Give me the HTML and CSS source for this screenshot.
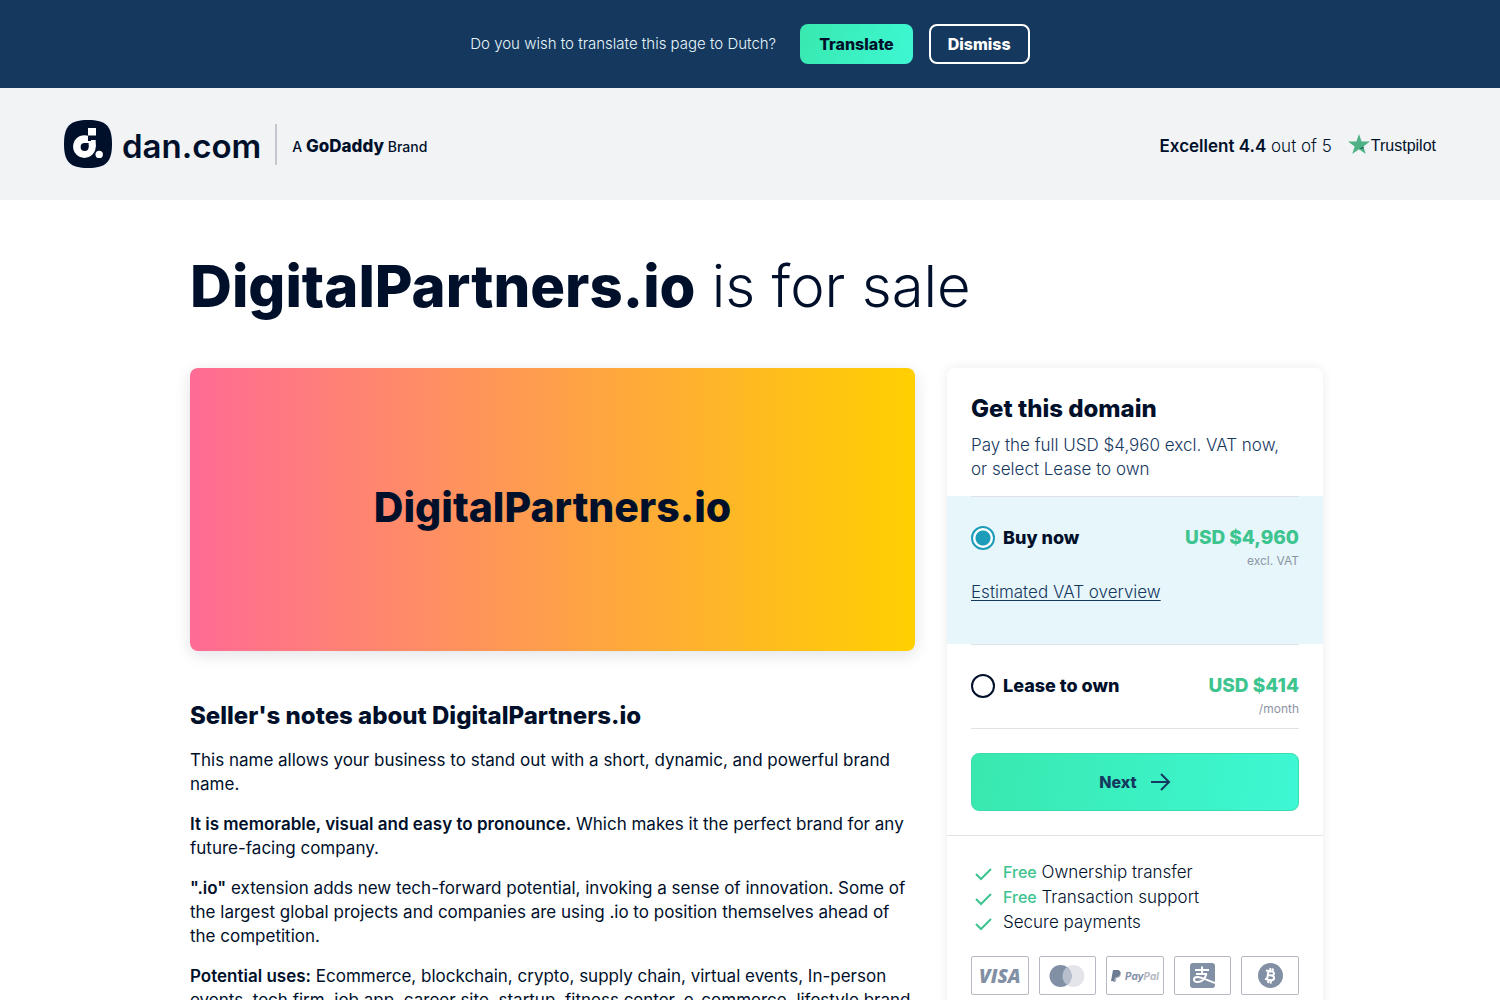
FILE: index.html
```html
<!DOCTYPE html>
<html lang="en">
<head>
    <meta charset="UTF-8">
    <meta name="viewport" content="width=device-width, initial-scale=1.0">
    <title>DigitalPartners.io is for sale</title>
    <link rel="stylesheet" href="styles.css">
</head>
<body>
    <div class="translate-bar">
        <span class="translate-text">Do you wish to translate this page to Dutch?</span>
        <button type="button" class="btn btn-translate">Translate</button>
        <button type="button" class="btn btn-dismiss">Dismiss</button>
    </div>

    <header class="header">
        <a href="#" class="logo">
            <svg class="logo-mark" viewBox="0 0 48 48" aria-hidden="true">
                <path fill="#00102b" d="M24 0C42 0 48 6 48 24S42 48 24 48 0 42 0 24 6 0 24 0z"/>
                <circle fill="#fff" cx="20.400" cy="26.600" r="11.300"/>
                <path fill="#00102b" d="M24 15.500h8V21h-8z"/>
                <path fill="#fff" d="M24 8h8v7.500h-8zM27 20h4.700v7H27z"/>
                <circle fill="#00102b" cx="20.600" cy="27" r="4"/>
                <path fill="#00102b" d="M20.600 23h4v4h-4z"/>
                <circle fill="#fff" cx="35.200" cy="34.400" r="3.700"/>
            </svg>
            <span class="logo-name">dan.com</span>
            <span class="logo-brand">A <b>GoDaddy</b> Brand</span>
        </a>
        <a href="#" class="trust">
            <span class="trust-score"><b>Excellent 4.4</b> out of 5</span>
            <span class="trust-logo">
                <svg width="22" height="20" viewBox="0 0 22 20" aria-hidden="true">
                    <path fill="#4fb286" d="M11 0l2.600 7.600H22l-6.700 4.800L17.800 20 11 15.300 4.200 20l2.500-7.600L0 7.600h8.400z"/>
                    <path fill="#1b5a4a" d="M15.300 12.400l.6 1.800L11 15.300z"/>
                </svg>
                <span class="trust-name">Trustpilot</span>
            </span>
        </a>
    </header>

    <main class="main">
        <h1><b>DigitalPartners.io</b> is for sale</h1>

        <div class="columns">
            <div class="content">
                <div class="banner">DigitalPartners.io</div>
                <h2>Seller's notes about DigitalPartners.io</h2>
                <p>This name allows your business to stand out with a short, dynamic, and powerful brand name.</p>
                <p><b>It is memorable, visual and easy to pronounce.</b> Which makes it the perfect brand for any future-facing company.</p>
                <p><b>".io"</b> extension adds new tech-forward potential, invoking a sense of innovation. Some of the largest global projects and companies are using .io to position themselves ahead of the competition.</p>
                <p><b>Potential uses:</b> Ecommerce, blockchain, crypto, supply chain, virtual events, In-person events, tech firm, job app, career site, startup, fitness center, e-commerce, lifestyle brand</p>
            </div>

            <aside class="card">
                <form>
                    <div class="card-intro">
                        <h2>Get this domain</h2>
                        <p>Pay the full USD $4,960 excl. VAT now, or select Lease to own</p>
                    </div>
                    <div class="option option-buy">
                        <div class="option-body">
                            <label class="option-label"><input type="radio" name="plan" checked> Buy now</label>
                            <div class="price">USD $4,960 <small>excl. VAT</small></div>
                        </div>
                        <a href="#" class="vat-link">Estimated VAT overview</a>
                    </div>
                    <div class="option option-lease">
                        <div class="option-body">
                            <label class="option-label"><input type="radio" name="plan"> Lease to own</label>
                            <div class="price">USD $414 <small>/month</small></div>
                        </div>
                    </div>
                    <div class="card-action">
                        <button type="submit" class="btn-next">
                            Next
                            <svg width="20" height="18" viewBox="0 0 20 18" fill="none" stroke="currentColor" stroke-width="2" aria-hidden="true">
                                <path d="M0 9h18M10 1l8 8-8 8"/>
                            </svg>
                        </button>
                    </div>
                </form>

                <div class="card-info">
                    <ul class="features">
                        <li><b>Free</b> Ownership transfer</li>
                        <li><b>Free</b> Transaction support</li>
                        <li>Secure payments</li>
                    </ul>
                    <div class="payments">
                        <span class="payment visa">VISA</span>
                        <span class="payment">
                            <svg width="36" height="24" viewBox="0 0 36 24" aria-label="Mastercard">
                                <circle cx="24.500" cy="12" r="11" fill="#e3e5eb"/>
                                <circle cx="11.500" cy="12" r="11" fill="#8290a6"/>
                                <path fill="#b7bfcc" d="M18 3.100a11 11 0 0 1 0 17.800 11 11 0 0 1 0-17.800z"/>
                            </svg>
                        </span>
                        <span class="payment paypal">
                            <svg width="10" height="12" viewBox="0 0 10 12" aria-hidden="true">
                                <path fill="#a5aebd" d="M3 2h6.500c1 4-1 6-4 6l-1 4H2z"/>
                                <path fill="#6c7a92" d="M2 0h4c3 0 4 2 3 4.500C8.200 6.500 6.500 7 4 7l-1 4H0z"/>
                            </svg>
                            <span>Pay<i>Pal</i></span>
                        </span>
                        <span class="payment">
                            <svg width="25" height="25" viewBox="0 0 25 25" fill="none" stroke="#fff" aria-label="Alipay">
                                <rect width="25" height="25" rx="3" fill="#8290a6" stroke="none"/>
                                <path stroke-width="2" d="M5 7h14M12 3.500v7M6 11h11"/>
                                <path stroke-width="2" d="M16.500 11c-1.500 4.500-5 8-9 8-5 0-4.500-5 0-5 4 0 9 3 17.500 6"/>
                            </svg>
                        </span>
                        <span class="payment">
                            <svg width="25" height="25" viewBox="0 0 25 25" fill="none" stroke="#fff" aria-label="Bitcoin">
                                <circle cx="12.500" cy="12.500" r="12.500" fill="#8290a6" stroke="none"/>
                                <path stroke-width="2" d="M8 7.500l6 1c3 .6 2.500 4-.500 4l-3-.500 3 .500c4 .8 3 5-.500 4.600l-6-1M10.500 8l-1.500 8.500M12.500 5l-.5 3M15 5.500l-.5 3M10.500 17l-.5 3M13 17.500l-.5 3"/>
                            </svg>
                        </span>
                    </div>
                </div>
            </aside>
        </div>
    </main>
</body>
</html>
```
FILE: styles.css
```css
* {
    box-sizing: border-box;
}
body {
    margin: 0;
    font-family: Inter, "Liberation Sans", sans-serif;
    font-size: 17px;
    font-weight: 300;
    line-height: 24px;
    color: #00102b;
    background-color: #fff;
}
a {
    color: inherit;
    text-decoration: none;
}
h1, h2, p, ul {
    margin: 0;
    padding: 0;
}
button {
    font-family: inherit;
    cursor: pointer;
}

/* translate bar */
.translate-bar {
    display: flex;
    justify-content: center;
    align-items: center;
    padding: 24px;
    background-color: #15385f;
}
.translate-text {
    margin-right: 24px;
    font-size: 15px;
    color: #e6f6fa;
}
.btn {
    height: 40px;
    padding: 0 17px;
    border: 2px solid transparent;
    border-radius: 8px;
    font-size: 16px;
    font-weight: 800;
}
.btn-translate {
    margin-right: 16px;
    border: 0;
    padding: 0 19px;
    background: linear-gradient(110deg, #38e8ae, #3ef8d4);
    color: #00102b;
}
.btn-dismiss {
    border-color: #fff;
    background-color: transparent;
    color: #fff;
}

/* header */
.header {
    display: flex;
    justify-content: space-between;
    align-items: center;
    padding: 32px 64px;
    background-color: #f1f3f5;
}
.logo {
    display: flex;
    align-items: center;
}
.logo-mark {
    width: 48px;
    height: 48px;
    margin-right: 10px;
}
.logo-name {
    padding-top: 4px;
    font-size: 33px;
    font-weight: 600;
}
.logo-brand {
    margin-left: 14px;
    padding: 4px 0 0 15px;
    border-left: 2px solid #c4c8ce;
    font-size: 14px;
    font-weight: 500;
    line-height: 36px;
}
.logo-brand b {
    font-size: 17px;
    font-weight: 800;
}
.trust {
    display: flex;
    align-items: center;
    gap: 16px;
}
.trust-score,
.trust-name {
    padding-top: 4px;
}
.trust-score b {
    font-weight: 600;
}
.trust-logo {
    display: flex;
    align-items: center;
    gap: 1px;
    font-family: "Liberation Sans", sans-serif;
    font-size: 16px;
}

/* page */
.main {
    max-width: 1146px;
    margin: 0 auto;
    padding: 56px 0 48px 13px;
}
h1 {
    margin-bottom: 52px;
    font-size: 58px;
    font-weight: 300;
    line-height: 60px;
}
h1 b {
    font-weight: 800;
}
h2 {
    padding-top: 1px;
    font-size: 24px;
    font-weight: 800;
    line-height: 32px;
}
.columns {
    display: grid;
    grid-template-columns: minmax(0, 1fr) 376px;
    gap: 32px;
    align-items: start;
}
.banner {
    display: flex;
    justify-content: center;
    align-items: center;
    height: 283px;
    margin-bottom: 48px;
    padding-bottom: 6px;
    border-radius: 8px;
    background: linear-gradient(90deg, #ff6b95, #ff9a52 45%, #ffd000);
    box-shadow: 0 4px 16px rgba(0, 16, 43, 0.12);
    font-size: 41px;
    font-weight: 800;
}
.content p {
    margin-top: 16px;
    font-weight: 400;
}
.content p b {
    font-weight: 600;
}

/* buy card */
.card {
    border-radius: 8px;
    box-shadow: 0 0 12px rgba(0, 16, 43, 0.08);
}
.card-intro {
    padding: 24px 24px 15px;
}
.card-intro p {
    margin-top: 8px;
    color: #15385f;
}
.option {
    padding: 0 24px;
}
.option-body {
    display: flex;
    justify-content: space-between;
    align-items: flex-start;
    padding-top: 29px;
    border-top: 1px solid #dfe3e8;
}
.option-buy {
    height: 148px;
    background-color: #e6f6fa;
}
.option-lease {
    height: 84px;
}
.option-label {
    display: flex;
    align-items: center;
    gap: 8px;
    font-size: 18px;
    font-weight: 800;
}
.option-label input {
    appearance: none;
    width: 24px;
    height: 24px;
    margin: 0;
    border: 2px solid #00102b;
    border-radius: 50%;
}
.option-label input:checked {
    border-color: #1c9cb9;
    background: radial-gradient(circle, #1c9cb9 7px, #fff 8px);
}
.price {
    font-size: 19px;
    font-weight: 800;
    text-align: right;
    color: #3dc48f;
}
.price small {
    display: block;
    font-size: 12px;
    font-weight: 400;
    line-height: 22px;
    color: #8c94a3;
}
.vat-link {
    display: inline-block;
    margin-top: 8px;
    color: #15385f;
    text-decoration: underline;
    text-underline-offset: 2px;
}
.card-action {
    margin: 0 24px;
    padding: 24px 0;
    border-top: 1px solid #dfe3e8;
}
.btn-next {
    display: flex;
    justify-content: center;
    align-items: center;
    gap: 14px;
    width: 100%;
    height: 58px;
    border: 1px solid #3cdcae;
    border-radius: 8px;
    background: linear-gradient(100deg, #38e8ae, #3ef8d4);
    font-size: 16px;
    font-weight: 800;
    color: #15385f;
}
.card-info {
    padding: 24px;
    border-top: 1px solid #dfe3e8;
}
.features {
    list-style: none;
}
.features li {
    padding-left: 32px;
    line-height: 25px;
    background: url("data:image/svg+xml,%3Csvg xmlns='http://www.w3.org/2000/svg' width='24' height='24' viewBox='0 0 24 24'%3E%3Cpath fill='none' stroke='%233dc48f' stroke-width='2' d='M5 13l5 5L20 8'/%3E%3C/svg%3E") no-repeat left center;
}
.features b {
    font-size: 16px;
    font-weight: 500;
    color: #3dc48f;
}
.payments {
    display: grid;
    grid-template-columns: repeat(5, 1fr);
    gap: 10px;
    margin-top: 21px;
}
.payment {
    display: flex;
    justify-content: center;
    align-items: center;
    height: 39px;
    border: 1px solid #b4b9c2;
    border-radius: 2px;
    color: #8290a6;
}
.visa {
    font-family: "Open Sans", sans-serif;
    font-size: 19px;
    font-style: italic;
    font-weight: 800;
}
.paypal {
    gap: 4px;
    font-size: 10px;
    font-style: italic;
    font-weight: 700;
}
.paypal i {
    color: #b4b9c2;
}
```
